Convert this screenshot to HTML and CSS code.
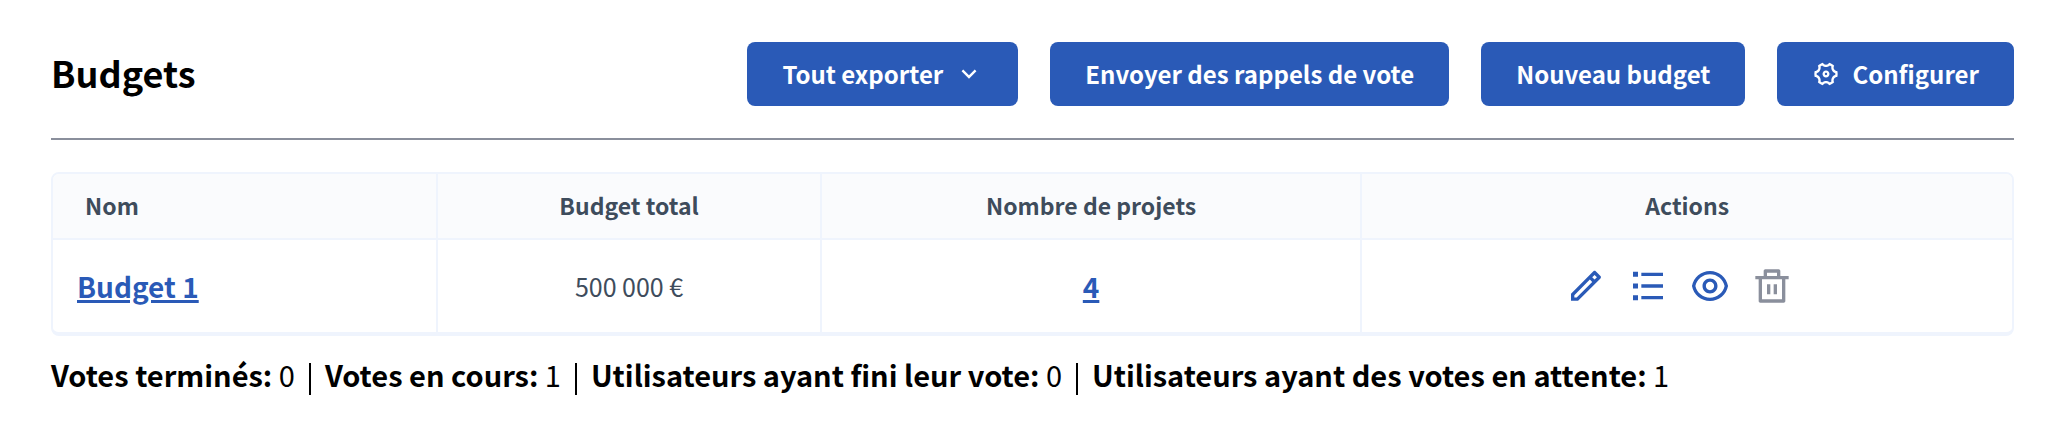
FILE: index.html
```html
<!DOCTYPE html>
<html lang="fr">
<head>
<meta charset="utf-8">
<title>Budgets</title>
<link rel="stylesheet" href="styles.css">
</head>
<body>
<main class="page">
  <header class="page-header">
    <h1 class="page-title">Budgets</h1>
    <div class="toolbar">
      <button class="button" type="button" aria-haspopup="true">Tout exporter
        <svg class="button-icon" viewBox="0 0 24 24" aria-hidden="true"><path d="M11.9999 13.1714L16.9497 8.22168L18.3639 9.63589L11.9999 15.9999L5.63599 9.63589L7.0502 8.22168L11.9999 13.1714Z"/></svg>
      </button>
      <a class="button" href="#rappels">Envoyer des rappels de vote</a>
      <a class="button" href="#nouveau">Nouveau budget</a>
      <a class="button" href="#configurer">
        <svg class="button-icon" viewBox="0 0 24 24" aria-hidden="true"><path d="M2 11.9998C2 11.1353 2.1097 10.2964 2.31595 9.49631C3.40622 9.55283 4.48848 9.01015 5.0718 7.99982C5.65467 6.99025 5.58406 5.78271 4.99121 4.86701C6.18354 3.69529 7.66832 2.82022 9.32603 2.36133C9.8222 3.33385 10.8333 3.99982 12 3.99982C13.1667 3.99982 14.1778 3.33385 14.674 2.36133C16.3317 2.82022 17.8165 3.69529 19.0088 4.86701C18.4159 5.78271 18.3453 6.99025 18.9282 7.99982C19.5115 9.01015 20.5938 9.55283 21.6841 9.49631C21.8903 10.2964 22 11.1353 22 11.9998C22 12.8643 21.8903 13.7032 21.6841 14.5033C20.5938 14.4469 19.5115 14.9896 18.9282 15.9998C18.3453 17.0094 18.4159 18.2169 19.0088 19.1326C17.8165 20.3043 16.3317 21.1794 14.674 21.6383C14.1778 20.6658 13.1667 19.9998 12 19.9998C10.8333 19.9998 9.8222 20.6658 9.32603 21.6383C7.66832 21.1794 6.18354 20.3043 4.99121 19.1326C5.58406 18.2169 5.65467 17.0094 5.0718 15.9998C4.48848 14.9896 3.40622 14.4469 2.31595 14.5033C2.1097 13.7032 2 12.8643 2 11.9998ZM6.80385 14.9998C7.43395 16.0912 7.61458 17.3459 7.36818 18.5236C7.77597 18.8138 8.21005 19.0652 8.66489 19.2741C9.56176 18.4712 10.7392 17.9998 12 17.9998C13.2608 17.9998 14.4382 18.4712 15.3351 19.2741C15.7899 19.0652 16.224 18.8138 16.6318 18.5236C16.3854 17.3459 16.566 16.0912 17.1962 14.9998C17.8262 13.9085 18.8225 13.1248 19.9655 12.7493C19.9884 12.5015 20 12.2516 20 11.9998C20 11.7481 19.9884 11.4981 19.9655 11.2504C18.8225 10.8749 17.8262 10.0912 17.1962 8.99982C16.566 7.90845 16.3854 6.65378 16.6318 5.47605C16.224 5.18588 15.7899 4.93447 15.3351 4.72552C14.4382 5.52842 13.2608 5.99982 12 5.99982C10.7392 5.99982 9.56176 5.52842 8.66489 4.72552C8.21005 4.93447 7.77597 5.18588 7.36818 5.47605C7.61458 6.65378 7.43395 7.90845 6.80385 8.99982C6.17376 10.0912 5.17745 10.8749 4.03451 11.2504C4.01157 11.4981 4 11.7481 4 11.9998C4 12.2516 4.01157 12.5015 4.03451 12.7493C5.17745 13.1248 6.17376 13.9085 6.80385 14.9998ZM12 14.9998C10.3431 14.9998 9 13.6567 9 11.9998C9 10.343 10.3431 8.99982 12 8.99982C13.6569 8.99982 15 10.343 15 11.9998C15 13.6567 13.6569 14.9998 12 14.9998ZM12 12.9998C12.5523 12.9998 13 12.5521 13 11.9998C13 11.4475 12.5523 10.9998 12 10.9998C11.4477 10.9998 11 11.4475 11 11.9998C11 12.5521 11.4477 12.9998 12 12.9998Z"/></svg>
        Configurer</a>
    </div>
  </header>

  <div class="table-frame">
    <table class="budgets">
      <colgroup>
        <col class="col-name">
        <col class="col-total">
        <col class="col-projects">
        <col class="col-actions">
      </colgroup>
      <thead>
        <tr>
          <th scope="col" class="head-name">Nom</th>
          <th scope="col">Budget total</th>
          <th scope="col">Nombre de projets</th>
          <th scope="col">Actions</th>
        </tr>
      </thead>
      <tbody>
        <tr>
          <td class="cell-name"><a class="link" href="#budget-1">Budget 1</a></td>
          <td>500 000 €</td>
          <td><a class="link" href="#projets">4</a></td>
          <td>
            <div class="actions">
              <a class="action" href="#modifier" aria-label="Modifier"><svg class="action-icon" viewBox="0 0 24 24" aria-hidden="true"><path d="M15.7279 9.57627L14.3137 8.16206L5 17.4758V18.89H6.41421L15.7279 9.57627ZM17.1421 8.16206L18.5563 6.74785L17.1421 5.33363L15.7279 6.74785L17.1421 8.16206ZM7.24264 20.89H3V16.6473L16.435 3.21231C16.8256 2.82179 17.4587 2.82179 17.8492 3.21231L20.6777 6.04074C21.0682 6.43126 21.0682 7.06443 20.6777 7.45495L7.24264 20.89Z"/></svg></a>
              <a class="action" href="#gerer" aria-label="Gérer les projets"><svg class="action-icon" viewBox="0 0 24 24" aria-hidden="true"><path d="M8 4H21V6H8V4ZM3 3.5H6V6.5H3V3.5ZM3 10.5H6V13.5H3V10.5ZM3 17.5H6V20.5H3V17.5ZM8 11H21V13H8V11ZM8 18H21V20H8V18Z"/></svg></a>
              <a class="action" href="#apercu" aria-label="Prévisualiser"><svg class="action-icon" viewBox="0 0 24 24" aria-hidden="true"><path d="M12.0003 3C17.3924 3 21.8784 6.87976 22.8189 12C21.8784 17.1202 17.3924 21 12.0003 21C6.60812 21 2.12215 17.1202 1.18164 12C2.12215 6.87976 6.60812 3 12.0003 3ZM12.0003 19C16.2359 19 19.8603 16.052 20.7777 12C19.8603 7.94803 16.2359 5 12.0003 5C7.7646 5 4.14022 7.94803 3.22278 12C4.14022 16.052 7.7646 19 12.0003 19ZM12.0003 16.5C9.51498 16.5 7.50026 14.4853 7.50026 12C7.50026 9.51472 9.51498 7.5 12.0003 7.5C14.4855 7.5 16.5003 9.51472 16.5003 12C16.5003 14.4853 14.4855 16.5 12.0003 16.5ZM12.0003 14.5C13.381 14.5 14.5003 13.3807 14.5003 12C14.5003 10.6193 13.381 9.5 12.0003 9.5C10.6196 9.5 9.50026 10.6193 9.50026 12C9.50026 13.3807 10.6196 14.5 12.0003 14.5Z"/></svg></a>
              <button class="action action-disabled" type="button" disabled aria-label="Supprimer"><svg class="action-icon" viewBox="0 0 24 24" aria-hidden="true"><path d="M17 6H22V8H20V21C20 21.5523 19.5523 22 19 22H5C4.44772 22 4 21.5523 4 21V8H2V6H7V3C7 2.44772 7.44772 2 8 2H16C16.5523 2 17 2.44772 17 3V6ZM18 8H6V20H18V8ZM9 11H11V17H9V11ZM13 11H15V17H13V11ZM9 4V6H15V4H9Z"/></svg></button>
            </div>
          </td>
        </tr>
      </tbody>
    </table>
  </div>

  <div class="summary">
    <span class="summary-item"><strong>Votes terminés:</strong> 0</span>
    <span class="summary-item"><strong>Votes en cours:</strong> 1</span>
    <span class="summary-item"><strong>Utilisateurs ayant fini leur vote:</strong> 0</span>
    <span class="summary-item"><strong>Utilisateurs ayant des votes en attente:</strong> 1</span>
  </div>
</main>
</body>
</html>
```
FILE: styles.css
```css
* {
  box-sizing: border-box;
}

body {
  margin: 0;
  background: #fff;
  color: #000;
  font-family: "Noto Sans CJK SC", "Noto Sans CJK JP", sans-serif;
  font-size: 29px;
  line-height: 40px;
}

.page {
  padding: 42px 42px 24px 51px;
}

.page-header {
  display: flex;
  align-items: center;
  justify-content: space-between;
  gap: 32px;
  padding-bottom: 32px;
  border-bottom: 2px solid #8a8f9c;
}

.page-title {
  margin: 0;
  padding-bottom: 4px;
  font-size: 36px;
  line-height: 48px;
  font-weight: 700;
}

.toolbar {
  display: flex;
  gap: 32px;
}

.button {
  display: inline-flex;
  align-items: center;
  gap: 12px;
  padding: 12px 35px;
  border: 0;
  border-radius: 8px;
  background: #2a5ab7;
  color: #fff;
  font-family: inherit;
  font-size: 24px;
  line-height: 40px;
  font-weight: 700;
  text-decoration: none;
  white-space: nowrap;
}

.button-icon {
  width: 28px;
  height: 28px;
  fill: currentColor;
}

.table-frame {
  margin-top: 32px;
  overflow: hidden;
  border: 2px solid #eff4fd;
  border-bottom-width: 4px;
  border-radius: 8px;
}

.budgets {
  width: 100%;
  border-collapse: separate;
  border-spacing: 0;
  table-layout: fixed;
  color: #3e4c5c;
}

.col-name,
.col-total {
  width: 19.57%;
}

.col-projects {
  width: 27.6%;
}

.budgets th {
  padding: 11px 32px 13px;
  border-bottom: 2px solid #eff4fd;
  background: #fafbfd;
  font-size: 23px;
  line-height: 40px;
  font-weight: 600;
}

.budgets td {
  height: 92px;
  padding: 0 24px;
  font-size: 25px;
  line-height: 40px;
  text-align: center;
  vertical-align: middle;
}

.budgets th + th,
.budgets td + td {
  border-left: 2px solid #eff4fd;
}

.budgets .head-name,
.budgets .cell-name {
  text-align: left;
}

.link {
  color: #2a5ab7;
  font-size: 28px;
  font-weight: 600;
  text-decoration: underline;
  text-decoration-thickness: 3px;
}

.actions {
  display: flex;
  justify-content: center;
  gap: 22px;
  padding-right: 16px;
}

.action {
  display: flex;
  padding: 0;
  border: 0;
  background: none;
  color: #2a5ab7;
}

.action-disabled {
  color: #8a8f9c;
}

.action-icon {
  width: 40px;
  height: 40px;
  fill: currentColor;
}

.summary {
  display: flex;
  flex-wrap: wrap;
  margin-top: 18px;
}

.summary-item + .summary-item {
  margin-left: 14px;
}

.summary-item + .summary-item::before {
  content: "";
  display: inline-block;
  width: 2px;
  height: 32px;
  margin-right: 14px;
  background: #000;
  vertical-align: middle;
}
```
